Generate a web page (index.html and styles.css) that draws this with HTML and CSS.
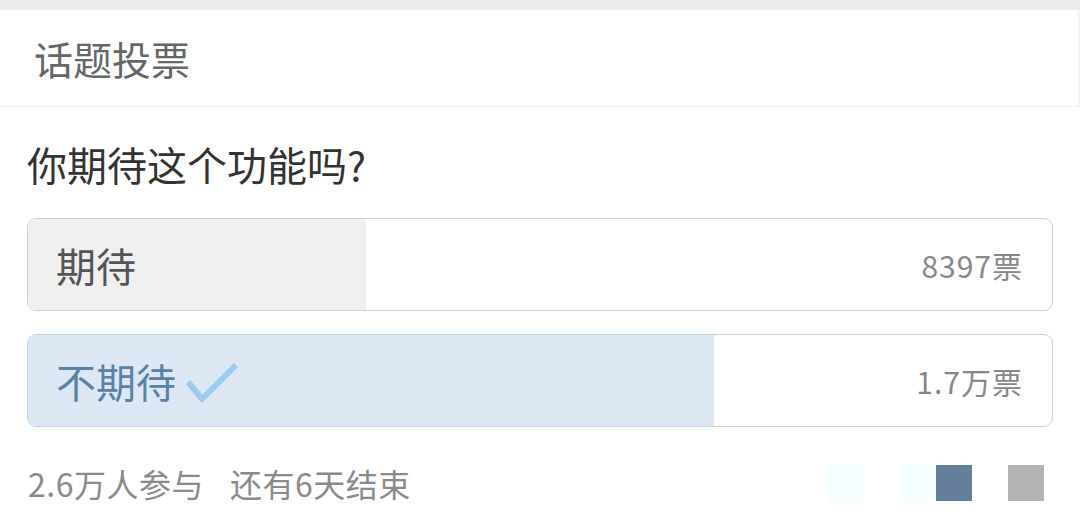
FILE: index.html
```html
<!DOCTYPE html>
<html lang="zh-CN">
  <head>
    <meta charset="UTF-8" />
    <meta name="viewport" content="width=device-width, initial-scale=1.0" />
    <title>话题投票</title>
    <link rel="stylesheet" href="styles.css">
  </head>
  <body>
    <div class="topbar"></div>
    <div class="header">话题投票</div>

    <div class="poll">
      <h2 class="question">你期待这个功能吗?</h2>

      <div class="option">
        <div class="fill" style="width: 33%"></div>
        <span class="label">期待</span>
        <span class="count">8397票</span>
      </div>

      <div class="option chosen">
        <div class="fill" style="width: 67%"></div>
        <span class="label">不期待
          <svg class="check" width="56" height="46" viewBox="0 0 56 46">
            <polyline points="4,23 18,40 52,6" fill="none" stroke="#9ccbf0" stroke-width="6" stroke-linejoin="round" />
          </svg>
        </span>
        <span class="count">1.7万票</span>
      </div>

      <div class="footer">
        <div class="meta">
          <span>2.6万人参与</span>
          <span>还有6天结束</span>
        </div>
        <div class="swatches">
          <i class="sw sw-light"></i>
          <i class="sw"></i>
          <i class="sw sw-light"></i>
          <i class="sw sw-blue"></i>
          <i class="sw"></i>
          <i class="sw sw-gray"></i>
        </div>
      </div>
    </div>
  </body>
</html>
```

FILE: styles.css
```css
* {
  margin: 0;
  padding: 0;
  box-sizing: border-box;
}
body {
  font-family: "Noto Sans CJK SC", "Noto Sans", sans-serif;
  background-color: #fff;
  width: 1080px;
  height: 523px;
  overflow: hidden;
}

.topbar {
  height: 10px;
  background-color: #ececec;
}

.header {
  height: 97px;
  padding-left: 34px;
  display: flex;
  align-items: center;
  font-size: 39px;
  color: #666;
  border-bottom: 1px solid #eee;
  border-right: 2px solid #f4f4f4;
}

.poll {
  padding: 0 27px 0 27px;
}

.question {
  margin-top: 31px;
  line-height: 52px;
  font-size: 40px;
  font-weight: normal;
  color: #333;
}

.option {
  position: relative;
  height: 93px;
  margin-top: 28px;
  border: 1px solid #cfcfcf;
  border-radius: 9px;
  overflow: hidden;
  display: flex;
  align-items: center;
  justify-content: space-between;
  padding: 0 30px 0 28px;
}
.option + .option {
  margin-top: 23px;
}

.option .fill {
  position: absolute;
  left: 0;
  top: 0;
  bottom: 0;
  background-color: #f0f0f0;
}

.label,
.count {
  position: relative;
  display: flex;
  align-items: center;
}

.label {
  font-size: 40px;
  color: #555;
}

.count {
  font-size: 30px;
  letter-spacing: 1px;
  margin-right: -1px;
  color: #888;
}

.option.chosen {
  border-color: #bcd6e2;
}
.option.chosen .fill {
  background-color: #dde8f4;
}
.option.chosen .label {
  color: #5b82a6;
}

.check {
  margin-left: 8px;
  margin-top: 2px;
}

.footer {
  margin-top: 30px;
  height: 52px;
  display: flex;
  align-items: center;
  justify-content: space-between;
  padding-left: 1px;
}

.meta {
  display: flex;
  gap: 26px;
  font-size: 32px;
  letter-spacing: 0.5px;
  color: #8a8a8a;
}

.swatches {
  display: grid;
  grid-template-columns: repeat(6, 36px);
  margin-right: 9px;
  margin-top: 0;
}
.sw {
  display: block;
  height: 36px;
}
.sw-light {
  background-color: #f6ffff;
}
.sw-blue {
  background-color: #657f9a;
}
.sw-gray {
  background-color: #b3b3b3;
}
```
